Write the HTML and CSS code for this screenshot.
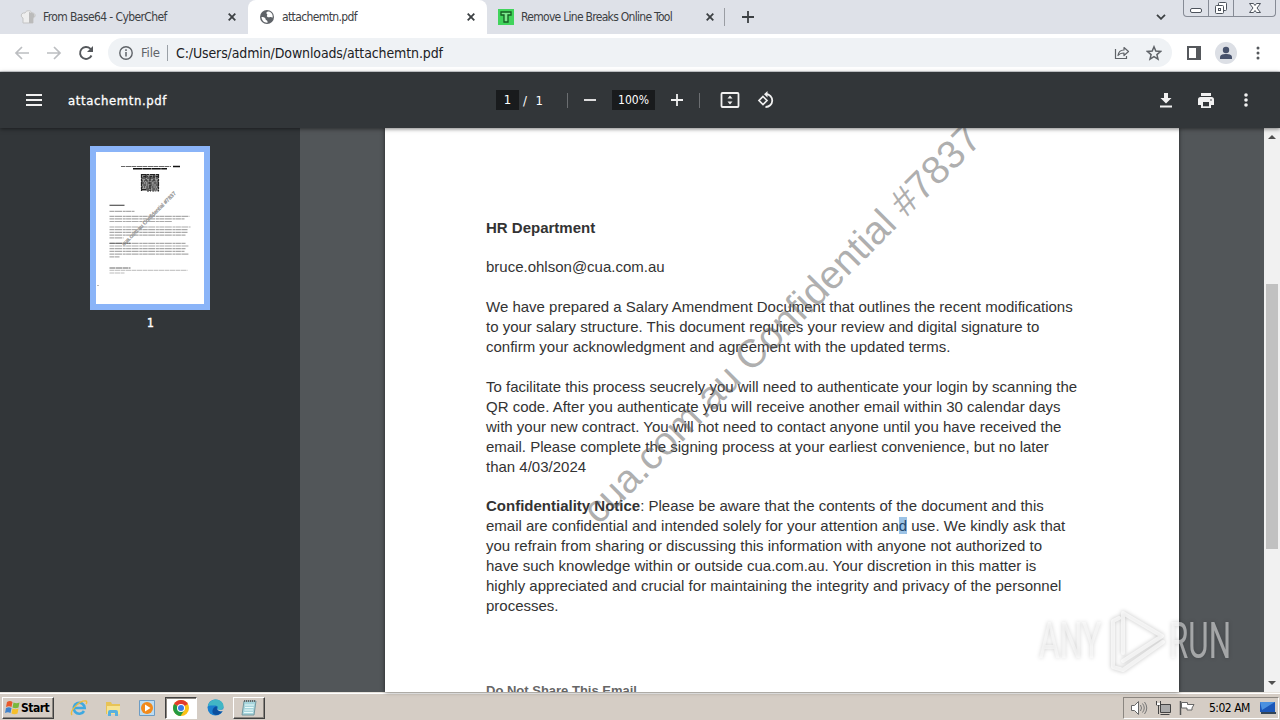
FILE: index.html
```
<!DOCTYPE html>
<html lang="en">
<head>
  <meta charset="UTF-8">
  <meta name="viewport" content="width=device-width, initial-scale=1.0">
  <title>attachemtn.pdf</title>
  <link rel="stylesheet" href="styles.css">
</head>
<body>
  <!-- Tab strip -->
  <div class="tab-strip">
    <div class="tab tab-first">
      <svg class="tab-icon" viewBox="0 0 16 16"><path d="M3 14V9C0 8 1 3 5 4c1-3 6-3 7 0 4 0 4 4 1 5v5z" fill="#eee" stroke="#c3c3c3"/><path d="M9 3v11h4V9c3-2 1-5-1-5z" fill="#bbb"/></svg>
      <span class="tab-title t1">From Base64 - CyberChef</span>
      <svg class="tab-close" viewBox="0 0 8 8"><path d="M.7.7l6.6 6.6M7.3.7L.7 7.3"/></svg>
    </div>
    <div class="tab tab-active">
      <svg class="tab-icon" viewBox="0 0 16 16"><circle cx="8" cy="8" r="7" fill="#5f6368"/><path d="M2.500 8c2 0 4 .4 4 2s2 1 2 2.500v1.200C5 14 2.500 11 2.500 8zM9 2.500c-2 .5-2 2-1 2.500s-1 2 .5 3 2-.5 3.500 0 1.500 1 1.700.2C14 5 12 2.500 9 2.500z" fill="#fff"/></svg>
      <span class="tab-title t2">attachemtn.pdf</span>
      <svg class="tab-close" viewBox="0 0 8 8"><path d="M.7.7l6.6 6.6M7.3.7L.7 7.3"/></svg>
    </div>
    <div class="tab tab-last">
      <svg class="tab-icon" viewBox="0 0 16 16"><path d="M0 0h16v16H0z" fill="#41d45c"/><path d="M3 3h10v3h-3v7H6V6H3z" fill="#7be88c" stroke="#145c22" stroke-width="1.300"/></svg>
      <span class="tab-title t3">Remove Line Breaks Online Tool</span>
      <svg class="tab-close" viewBox="0 0 8 8"><path d="M.7.7l6.6 6.6M7.3.7L.7 7.3"/></svg>
    </div>
    <svg class="new-tab" viewBox="0 0 12 12"><path d="M6 0v12M0 6h12" stroke="#3c4043" stroke-width="1.800"/></svg>
    <svg class="tab-search" viewBox="0 0 10 6"><path d="M1 .8l4 4 4-4" fill="none" stroke="#3c4043" stroke-width="1.800"/></svg>
    <div class="window-buttons">
      <span class="win-btn"><svg width="14" height="16"><rect x="1.500" y="8.500" width="11" height="4" rx="1.500" fill="#fff" stroke="#4d535c"/></svg></span>
      <span class="win-btn"><svg width="14" height="16"><rect x="4.500" y="2.500" width="8" height="8" rx="1" fill="#fff" stroke="#4d535c"/><rect x="1.500" y="5.500" width="8" height="8" rx="1" fill="#fff" stroke="#4d535c"/><rect x="4.500" y="8.500" width="2" height="2" fill="#fff" stroke="#4d535c"/></svg></span>
      <span class="win-btn win-close"><svg width="14" height="16"><path d="M1.500 3.500h4l1.500 2 1.500-2h4L9 8l3.500 4.500h-4L7 10.500l-1.500 2h-4L5 8z" fill="#fff" stroke="#4d535c"/></svg></span>
    </div>
  </div>

  <!-- Address bar -->
  <div class="address-row">
    <svg class="nav-icon" viewBox="0 0 16 16"><path d="M15 8H2M8 2L2 8l6 6" fill="none" stroke="#bcbec1" stroke-width="1.700"/></svg>
    <svg class="nav-icon" viewBox="0 0 16 16"><path d="M1 8h13M8 2l6 6-6 6" fill="none" stroke="#bcbec1" stroke-width="1.700"/></svg>
    <svg class="nav-icon" viewBox="0 0 16 16"><path d="M13.500 10.500a6 6 0 1 1-1.200-6.800L14 5.500" fill="none" stroke="#55585c" stroke-width="1.900"/><path d="M15 1v6H9z" fill="#55585c"/></svg>
    <div class="omnibox">
      <svg class="info-icon" viewBox="0 0 14 14"><circle cx="7" cy="7" r="6.200" fill="none" stroke="#5f6368" stroke-width="1.400"/><path d="M7 6v4.500M7 3.300v1.600" stroke="#5f6368" stroke-width="1.500"/></svg>
      <span class="scheme">File</span>
      <span class="divider"></span>
      <span class="url">C:/Users/admin/Downloads/attachemtn.pdf</span>
      <svg class="share-icon" viewBox="0 0 16 16"><path d="M1.500 4v9.500h11V11" fill="none" stroke="#5f6368" stroke-width="1.200"/><path d="M4 10.500c.5-4 3-5.500 6-5.500V2.500l4.500 4-4.500 4V8c-3 0-4.500.5-6 2.500z" fill="none" stroke="#5f6368" stroke-width="1.200" stroke-linejoin="round"/></svg>
      <svg class="star-icon" viewBox="0 0 16 16"><path d="M8 1.800l1.800 4.300 4.700.4-3.600 3.100 1.100 4.600-4-2.500-4 2.500 1.100-4.600L1.500 6.500l4.700-.4z" fill="none" stroke="#5f6368" stroke-width="1.500"/></svg>
    </div>
    <svg class="panel-icon" viewBox="0 0 14 14"><path d="M1 1h12v12H1z" fill="none" stroke="#55585c" stroke-width="2"/><path d="M9 1h4v12H9z" fill="#55585c"/></svg>
    <svg class="avatar" viewBox="0 0 22 22"><circle cx="11" cy="11" r="11" fill="#dcdfe5"/><circle cx="11" cy="8" r="3.200" fill="#47526c"/><path d="M5 17v-1.500c0-3 3-3.500 6-3.500s6 .5 6 3.500V17z" fill="#47526c"/></svg>
    <svg class="menu-dots" viewBox="0 0 4 14"><g fill="#55585c"><circle cx="2" cy="2" r="1.500"/><circle cx="2" cy="7" r="1.500"/><circle cx="2" cy="12" r="1.500"/></g></svg>
  </div>

  <!-- PDF toolbar -->
  <div class="pdf-toolbar">
    <div class="toolbar-left">
      <svg class="burger" viewBox="0 0 16 12"><path d="M0 1h16M0 6h16M0 11h16" stroke="#f1f1f1" stroke-width="2"/></svg>
      <span class="file-name">attachemtn.pdf</span>
    </div>
    <div class="toolbar-center">
      <span class="page-input">1</span>
      <span class="page-total">/&nbsp; 1</span>
      <span class="separator"></span>
      <svg class="zoom-icon" viewBox="0 0 12 12"><path d="M0 6h12" stroke="#f1f1f1" stroke-width="1.800"/></svg>
      <span class="zoom-value">100%</span>
      <svg class="zoom-icon" viewBox="0 0 12 12"><path d="M0 6h12M6 0v12" stroke="#f1f1f1" stroke-width="1.800"/></svg>
      <span class="separator"></span>
      <svg class="fit-icon" viewBox="0 0 20 16"><rect x="1.500" y="1" width="17" height="14" rx="1" fill="none" stroke="#f1f1f1" stroke-width="1.800"/><path d="M10 3.500L7.500 6.500h5zM10 12.500L7.500 9.500h5z" fill="#f1f1f1"/></svg>
      <svg class="rotate-icon" viewBox="0 0 18 18"><path d="M6 5.500l4 4-4 4-4-4z" fill="none" stroke="#f1f1f1" stroke-width="1.700"/><path d="M9 3a6.500 6.500 0 1 1-.5 13" fill="none" stroke="#f1f1f1" stroke-width="1.800"/><path d="M10.500 0v6.500L7 3.200z" fill="#f1f1f1"/></svg>
    </div>
    <div class="toolbar-right">
      <svg width="12" height="15" viewBox="0 0 12 15"><path d="M4 0h4v5h3.500L6 10.500.5 5H4zM0 12.500h12v1.900H0z" fill="#f1f1f1"/></svg>
      <svg width="16" height="15" viewBox="0 0 16 15"><path d="M3 0h10v3H3zM2.500 4h11A2.500 2.500 0 0 1 16 6.500V12h-3v3H3v-3H0V6.500A2.500 2.500 0 0 1 2.500 4z" fill="#f1f1f1"/><path d="M5 9h6v4.300H5z" fill="#323639"/><circle cx="13" cy="7" r=".8" fill="#323639"/></svg>
      <svg width="4" height="14" viewBox="0 0 4 14"><g fill="#f1f1f1"><circle cx="2" cy="2" r="1.800"/><circle cx="2" cy="7" r="1.800"/><circle cx="2" cy="12" r="1.800"/></g></svg>
    </div>
  </div>

  <!-- PDF viewer -->
  <div class="viewer">
    <div class="sidebar">
      <div class="thumbnail">
        <svg width="108" height="152" viewBox="0 0 108 152">
          <path d="M25 14.500h50" stroke="#666" stroke-dasharray="4 .6 6 .4"/>
          <path d="M77 14.500h7M37 16.800h34" stroke="#111" stroke-width="1.400" stroke-dasharray="9 .4"/>
          <path d="M45 22h18v17H45z" fill="#999"/>
          <g stroke="#222" stroke-width="1.200">
            <path d="M45 22.500h18M45 26h18M45 37.500h6" stroke-dasharray="5 1 2 1"/>
            <path d="M45 24.300h18M45 33h18" stroke-dasharray="1 1.200 3 1"/>
            <path d="M45 29h18M45 35h18M51 39h12" stroke-dasharray="2 1 1 1.300"/>
            <path d="M45 31h18M50 37h13" stroke-dasharray="3 .8 1 1.500"/>
            <path d="M45.500 22v17M50 22v7M62.500 22v17M58 22v7M54 25v14" stroke-dasharray="4 1 2 1"/>
          </g>
          <path d="M13.500 53.300h15" stroke="#555" stroke-width="1.200"/>
          <g stroke="#aaa" stroke-width="1.200" stroke-dasharray="5 .5 7 .7 3 .4">
            <path d="M13.500 59.300h25M13.500 64.300h80M13.500 66.900h75M13.500 69.500h63M13.500 75h81M13.500 77.700h78M13.500 80.400h78M13.500 83.100h76M13.500 85.800h14M13.500 91.300h76M13.500 94h79M13.500 96.700h76M13.500 99.400h75M13.500 102.100h79M13.500 104.800h10"/>
          </g>
          <path d="M13.500 91.300h21M13.500 116h21" stroke="#666" stroke-dasharray="6 .5"/>
          <path d="M13.500 118.300h78M13.500 121h15M1 133.500h2" stroke="#bbb" stroke-dasharray="5 .5"/>
          <text x="28" y="94" class="thumb-mark" transform="rotate(-45 28 94)" textLength="74">cua.com.au Confidential #7837</text>
        </svg>
      </div>
      <div class="thumb-label">1</div>
    </div>
    <div class="canvas">
      <div class="page">
        <p class="bold">HR Department</p>
        <p>bruce.ohlson@cua.com.au</p>
        <p>We have prepared a Salary Amendment Document that outlines the recent modifications<br>
          to your salary structure. This document requires your review and digital signature to<br>
          confirm your acknowledgment and agreement with the updated terms.</p>
        <p class="instructions">To facilitate this process seucrely you will need to authenticate your login by scanning the<br>
          QR code. After you authenticate you will receive another email within 30 calendar days<br>
          with your new contract. You will not need to contact anyone until you have received the<br>
          email. Please complete the signing process at your earliest convenience, but no later<br>
          than 4/03/2024</p>
        <p><b>Confidentiality Notice</b>: Please be aware that the contents of the document and this<br>
          email are confidential and intended solely for your attention an<span class="selected">d</span> use. We kindly ask that<br>
          you refrain from sharing or discussing this information with anyone not authorized to<br>
          have such knowledge within or outside cua.com.au. Your discretion in this matter is<br>
          highly appreciated and crucial for maintaining the integrity and privacy of the personnel<br>
          processes.</p>
        <p class="footer-note">Do Not Share This Email</p>
        <div class="watermark">cua.com.au Confidential #7837</div>
      </div>
      <div class="scrollbar">
        <span class="arrow arrow-up"></span>
        <span class="scroll-thumb"></span>
        <span class="arrow arrow-down"></span>
      </div>
      <!-- Recorder logo, sits on top of the page -->
      <svg class="anyrun" width="200" height="70" viewBox="0 0 200 70">
        <g fill="#fff" fill-opacity=".5">
          <text x="4" y="52" textLength="62" lengthAdjust="spacingAndGlyphs">ANY</text>
          <text x="134" y="52" textLength="62" lengthAdjust="spacingAndGlyphs">RUN</text>
        </g>
        <path d="M84 12l-6 3v46l10 3 40-28M88 47V7l39 23-39 25" fill="none" stroke="#fff" stroke-opacity=".65" stroke-width="4" stroke-linejoin="round" stroke-linecap="round"/>
      </svg>
    </div>
  </div>

  <!-- Taskbar -->
  <div class="taskbar">
    <div class="start-btn">
      <svg width="15" height="15" viewBox="0 0 15 15"><path d="M2 2q3-2 5.500 0L6.500 7Q4 5.500 1 7z" fill="#e8582a"/><path d="M8.500 2.500q3 1.500 6 0L13.500 7.500q-3 1.500-6 0z" fill="#79b83c"/><path d="M1 8q3-1.500 5.500 0L5.500 13Q3 11.500 0 13z" fill="#3f82cc"/><path d="M7.500 8.500q3 1.500 6 0L12.500 13.500q-3 1.500-6 0z" fill="#f6bf2b"/></svg>
      <span>Start</span>
    </div>
    <div class="task-icons">
      <span class="task"><svg width="18" height="18" viewBox="0 0 18 18"><path d="M14 12a5.500 5.500 0 1 1 .7-3H5" fill="none" stroke="#3fa9e0" stroke-width="2.600"/><path d="M2 16C-1 12 10 1 16 2c1 .3 1 2 0 3" fill="none" stroke="#eebc3b" stroke-width="1.400"/></svg></span>
      <span class="task"><svg width="18" height="18" viewBox="0 0 18 18"><path d="M2 3h5l1 2h8v10H2z" fill="#e8c356"/><path d="M3 7h13v8H3z" fill="#f7e391"/><path d="M4 17v-4q0-2 2-2h6q2 0 2 2v4h-3v-3H7v3z" fill="#58b0de"/></svg></span>
      <span class="task"><svg width="18" height="18" viewBox="0 0 18 18"><path d="M1.500 1.500h15v15h-15z" fill="#bcdcf2" stroke="#6d9cc4"/><circle cx="9" cy="9" r="6" fill="#f28a1b"/><path d="M7 5.500v7L12.500 9z" fill="#fff"/></svg></span>
      <span class="task task-active"><svg width="16" height="16" viewBox="0 0 16 16"><circle cx="8" cy="8" r="8" fill="#fbc116"/><path d="M8 8L1.100 4A8 8 0 0 1 14.900 4z" fill="#e33b2e"/><path d="M8 8L1.100 4A8 8 0 0 0 7.500 16l4-6z" fill="#249a41"/><circle cx="8" cy="8" r="4" fill="#fff"/><circle cx="8" cy="8" r="3" fill="#3a7ae8"/></svg></span>
      <span class="task"><svg width="17" height="17" viewBox="0 0 17 17"><circle cx="8.500" cy="8.500" r="8" fill="#1b7fcf"/><path d="M1 7C2 2 6 .5 9 .5c5 0 8 4 7.500 7.500-.4 3-4 3.500-6 2.500 1-2 0-4-3-4S2 6 1 7z" fill="#41b6c5"/><path d="M10.500 7.500c-2 3 1 6 5 4.500-2 3.500-6 5-9 3-2-2-1-6 2-7.500z" fill="#0d4f9e"/><path d="M10 8c-.5 3 3 4 6.500 2v2c-3 1-7-.5-6.500-4z" fill="#d5cdc5"/></svg></span>
      <span class="task task-raised"><svg width="16" height="18" viewBox="0 0 16 18"><path d="M3 2h12l-2 14H1z" fill="#a7d5dc" stroke="#74979f"/><path d="M4 6h9M4 8.500h8.500M3.500 11H12M3 13.500h9" stroke="#e9fafa"/><path d="M3 2h12" stroke="#666" stroke-width="2" stroke-dasharray="1 1"/></svg></span>
    </div>
    <div class="tray">
      <svg width="18" height="16" viewBox="0 0 18 16"><path d="M1.500 5.500h3l4-4v13l-4-4h-3z" fill="#fff" stroke="#666"/><path d="M10.500 5q2 3 0 6M12.500 3.500q3.500 4.500 0 9M14.500 2q4.500 6 0 12" fill="none" stroke="#777"/></svg>
      <svg width="17" height="16" viewBox="0 0 17 16"><path d="M5.500 4.500h10v8h-10z" fill="#aaa" stroke="#444"/><path d="M1.500 1v4h4V1M3.500 5v9M5.500 14.500h9" fill="none" stroke="#444"/><path d="M2 3h3v2H2z" fill="#fff"/></svg>
      <svg width="17" height="16" viewBox="0 0 17 16"><path d="M1.500 1v14" stroke="#555" stroke-width="1.500"/><path d="M2.500 2.500h6v2h6.500l-2 3.500 0 2h-5V8H2.500z" fill="#fff" stroke="#666"/></svg>
      <span class="clock">5:02 AM</span>
      <svg class="desktop-icon" width="16" height="14" viewBox="0 0 16 14"><path d="M0 1h15v10H0z" fill="#1c57b8"/><path d="M0 1h15L2 9z" fill="#4b91e0"/><path d="M1 11h15v2H1z" fill="#345"/></svg>
    </div>
  </div>
</body>
</html>
```
FILE: styles.css
```
* {
  margin: 0;
  padding: 0;
  box-sizing: border-box;
}

body {
  width: 1280px;
  height: 720px;
  overflow: hidden;
  display: flex;
  flex-direction: column;
  font-family: 'DejaVu Sans Condensed', 'DejaVu Sans', sans-serif;
  background: #fff;
}

svg {
  display: block;
  flex-shrink: 0;
}

span {
  white-space: nowrap;
}

/* Tab strip */
.tab-strip {
  display: flex;
  height: 34px;
  background: #dee1e8;
}

.tab {
  display: flex;
  align-items: center;
  width: 239px;
  padding: 0 12px 0 11px;
}

.tab-first {
  width: 248px;
  padding-left: 20px;
}

.tab-active {
  background: #fff;
  border-radius: 8px 8px 0 0;
}

.tab-last {
  height: 18px;
  margin-top: 8px;
  width: 238px;
  padding-right: 10px;
  border-right: 1px solid #9a9da3;
}

.tab-icon {
  width: 16px;
  height: 16px;
  margin-right: 7px;
}

.tab-title {
  flex: 1;
  font-size: 12px;
  color: #3c4043;
}

.t1 { letter-spacing: -0.6px; }
.t2 { letter-spacing: -0.62px; }
.t3 { letter-spacing: -0.71px; }

.tab-close {
  width: 8px;
  height: 8px;
  stroke: #3c4043;
  stroke-width: 1.8;
}

.new-tab {
  width: 12px;
  height: 12px;
  margin: 11px 0 0 17px;
}

.tab-search {
  width: 10px;
  height: 6px;
  margin: 14px 17px 0 auto;
}

.window-buttons {
  display: flex;
  width: 93px;
  height: 17px;
  margin-right: 4px;
  border: 1px solid #868b95;
  border-top: 0;
  border-radius: 0 0 4px 4px;
}

.win-btn {
  width: 25px;
  display: flex;
  justify-content: center;
  border-right: 1px solid #868b95;
}

.win-close {
  flex: 1;
  border-right: 0;
}

/* Address bar */
.address-row {
  display: flex;
  align-items: center;
  height: 38px;
  padding: 0 20px 0 14px;
  border-bottom: 1px solid #d4d7da;
}

.nav-icon {
  width: 16px;
  height: 16px;
  margin-right: 16px;
}

.omnibox {
  flex: 1;
  display: flex;
  align-items: center;
  height: 29px;
  margin-left: -2px;
  padding: 0 10px 0 11px;
  border-radius: 15px;
  background: #eff2f5;
}

.info-icon {
  width: 14px;
  height: 14px;
}

.scheme {
  margin-left: 8px;
  width: 18px;
  font-size: 13px;
  letter-spacing: -0.2px;
  color: #5f6368;
}

.divider {
  width: 1px;
  height: 16px;
  margin: 0 8px;
  background: #9aa0a6;
}

.url {
  flex: 1;
  font-size: 14px;
  letter-spacing: -0.12px;
  color: #202124;
}

.share-icon {
  width: 16px;
  height: 16px;
  margin-right: 16px;
}

.star-icon {
  width: 16px;
  height: 16px;
}

.panel-icon {
  width: 14px;
  height: 14px;
  margin: 0 14px 0 15px;
}

.avatar {
  width: 22px;
  height: 22px;
  margin-right: 19px;
}

.menu-dots {
  width: 4px;
  height: 14px;
}

/* PDF toolbar */
.pdf-toolbar {
  display: grid;
  grid-template-columns: 496px 1fr auto;
  align-items: center;
  height: 56px;
  background: #323639;
  color: #fff;
  font-size: 13px;
  position: relative;
  z-index: 1;
  box-shadow: 0 1px 4px rgba(0, 0, 0, 0.5);
}

.toolbar-left,
.toolbar-center,
.toolbar-right {
  display: flex;
  align-items: center;
}

.burger {
  width: 16px;
  height: 12px;
  margin: 0 26px;
}

.file-name {
  letter-spacing: 0.6px;
  -webkit-text-stroke: 0.3px #fff;
}

.page-input,
.zoom-value {
  height: 20px;
  line-height: 20px;
  text-align: center;
  background: #191b1d;
}

.page-input {
  width: 23px;
}

.page-total {
  width: 20px;
  margin-left: 4px;
  letter-spacing: 0.4px;
}

.separator {
  width: 1px;
  height: 15px;
  background: #6b6e71;
  margin-left: 24px;
}

.zoom-icon {
  width: 12px;
  height: 12px;
  margin: 0 16px;
}

.zoom-value {
  width: 43px;
  font-size: 12px;
}

.zoom-value + .zoom-icon {
  margin-right: 0;
}

.zoom-icon + .separator {
  margin-left: 16px;
}

.fit-icon {
  width: 20px;
  height: 16px;
  margin-left: 20px;
}

.rotate-icon {
  width: 18px;
  height: 18px;
  margin-left: 17px;
}

.toolbar-right {
  gap: 30px;
  padding-right: 32px;
}

.toolbar-right svg:nth-child(2) {
  margin-left: -4px;
}

/* Viewer */
.viewer {
  display: flex;
  height: 564px;
}

.sidebar {
  width: 300px;
  padding-top: 18px;
  background: #323639;
}

.thumbnail {
  width: 120px;
  height: 164px;
  margin: 0 auto;
  border: 6px solid #8ab4f8;
  background: #fff;
}

.thumb-mark {
  font: 5.4px 'Liberation Sans', sans-serif;
  fill: #999;
  stroke: #999;
  stroke-width: 0.3px;
}

.thumb-label {
  margin-top: 6px;
  padding-left: 1px;
  text-align: center;
  font-size: 12px;
  color: #fff;
  -webkit-text-stroke: 0.4px #fff;
}

.canvas {
  position: relative;
  flex: 1;
  display: flex;
  justify-content: space-between;
  background: #525659;
}

.page {
  position: relative;
  width: 794px;
  height: 564px;
  margin-left: 85px;
  padding: 90px 0 0 101px;
  overflow: hidden;
  background: #fff;
  color: #333;
  font: 15px/20px 'Liberation Sans', Arial, sans-serif;
  box-shadow: 0 0 4px rgba(0, 0, 0, 0.6);
}

.page p {
  margin-bottom: 20px;
  white-space: nowrap;
}

.page .bold {
  margin-bottom: 19px;
  font-weight: bold;
}

.page .instructions {
  margin-bottom: 19px;
}

.selected {
  background: #9cc3e6;
  color: #24466b;
}

.page .footer-note {
  margin-top: 65px;
  font-size: 13px;
  font-weight: bold;
  color: #666;
}

.watermark {
  position: absolute;
  left: 213px;
  top: 362px;
  font-size: 39.5px;
  line-height: 44px;
  white-space: nowrap;
  color: rgba(96, 96, 96, 0.5);
  transform-origin: 0 35px;
  transform: rotate(-45deg);
}

.scrollbar {
  display: flex;
  flex-direction: column;
  align-items: center;
  width: 16px;
  background: #f1f1f1;
}

.arrow {
  border: 4px solid transparent;
}

.arrow-up {
  margin-top: 3px;
  border-bottom-color: #505050;
}

.arrow-down {
  margin: auto 0 3px;
  border-top-color: #505050;
}

.scroll-thumb {
  width: 12px;
  height: 265px;
  margin-top: 145px;
  background: #c1c1c1;
}

.anyrun {
  position: absolute;
  left: 735px;
  top: 478px;
  font: 50px Roboto, sans-serif;
  filter: drop-shadow(0 0 2px rgba(0, 0, 0, 0.35));
}

/* Taskbar */
.taskbar {
  display: flex;
  align-items: center;
  height: 28px;
  padding: 2px 1px 0 2px;
  background: #d5cdc5;
  border-top: 1px solid #e6e2dc;
  box-shadow: inset 0 1px #fff;
  font-size: 12px;
  color: #000;
}

.start-btn {
  display: flex;
  align-items: center;
  gap: 1px;
  width: 52px;
  height: 22px;
  padding-left: 2px;
  font-weight: bold;
  letter-spacing: -0.5px;
  border: 1px solid;
  border-color: #fff #404040 #404040 #fff;
  box-shadow: inset -1px -1px #8b8680;
}

.task-icons {
  display: flex;
  margin-left: 9px;
  gap: 2px;
}

.task {
  display: flex;
  align-items: center;
  justify-content: center;
  width: 32px;
  height: 22px;
}

.task-active {
  background: #fff;
  border: 1px solid;
  border-color: #404040 #fff #fff #404040;
  box-shadow: inset 1px 1px #8b8680;
}

.task-raised {
  border: 1px solid;
  border-color: #fff #404040 #404040 #fff;
  box-shadow: inset -1px -1px #8b8680;
}

.tray {
  display: flex;
  align-items: center;
  width: 156px;
  height: 22px;
  margin-left: auto;
  padding-left: 6px;
  gap: 7px;
  border: 1px solid;
  border-color: #8b8680 #fff #fff #8b8680;
}

.clock {
  margin-left: 6px;
  letter-spacing: -0.5px;
}

.desktop-icon {
  margin-left: 3px;
}
```
